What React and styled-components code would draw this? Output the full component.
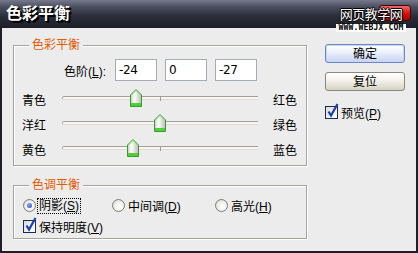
import React from "react";
import styled, { createGlobalStyle } from "styled-components";

const GlobalStyle = createGlobalStyle`
  html, body { margin: 0; padding: 0; background: #1e2029; }
  #root { width: 418px; height: 253px; }
`;

const FONT = `"Liberation Sans", "Noto Sans CJK SC", sans-serif`;

const Window = styled.div`
  position: relative;
  width: 418px;
  height: 253px;
  display: flex;
  flex-direction: column;
  background: #1e2029;
  font-family: ${FONT};
  font-size: 12px;
  color: #000;
  overflow: hidden;
`;

const TitleBar = styled.div`
  height: 28px;
  flex: none;
  display: flex;
  align-items: flex-start;
  justify-content: space-between;
  background: linear-gradient(#767a8c 0%, #4a4d5d 25%, #2a2c38 60%, #1c1e27 100%);
`;

const Title = styled.div`
  padding: 3px 0 0 6px;
  font-size: 16px;
  font-weight: bold;
  line-height: 18px;
  color: #fff;
  text-shadow: 1px 1px 0 #000, 2px 2px 0 #000;
  font-family: "Noto Sans CJK SC", sans-serif;
`;

const CloseBtn = styled.div`
  margin: 5px 7px 0 0;
  width: 30px;
  height: 14px;
  border-radius: 3px;
  border: 1px solid #3a0a0a;
  background: linear-gradient(#f06a6a, #d41616 50%, #a50000);
`;

const Watermark = styled.div`
  position: absolute;
  left: 333px;
  top: 6px;
  width: 76px;
  display: flex;
  flex-direction: column;
  align-items: center;
`;

const WmTitle = styled.div`
  font-family: "Noto Sans CJK SC", sans-serif;
  font-size: 13px;
  line-height: 16px;
  color: #fff;
  letter-spacing: -0.5px;
  text-shadow: 1px 0 0 #000, -1px 0 0 #000, 0 1px 0 #000, 0 -1px 0 #000;
`;

const WmUrl = styled.div`
  margin-top: 2px;
  background: #fff;
  color: #000;
  font-family: "DejaVu Sans Mono", monospace;
  font-size: 8px;
  font-weight: bold;
  line-height: 8px;
  padding: 0 2px;
  letter-spacing: 0.2px;
`;

const Body = styled.div`
  flex: 1;
  margin: 0 2px 2px 2px;
  background: #ececec;
  display: flex;
  padding: 17px 0 0 11px;
`;

const LeftCol = styled.div`
  display: flex;
  flex-direction: column;
  gap: 19px;
`;

const Group = styled.div`
  position: relative;
  width: 294px;
  height: ${(p) => p.$h}px;
  box-sizing: border-box;
  border: 1px solid #a4a49c;
  box-shadow: inset 1px 1px 0 #fff, 1px 1px 0 #fff;
  padding: ${(p) => p.$pad};
  display: flex;
  flex-direction: column;
`;

const Legend = styled.span`
  position: absolute;
  top: -9px;
  left: 15px;
  padding: 0 3px;
  background: #ececec;
  color: #e15a05;
  line-height: 16px;
  font-size: 12px;
`;

const InputRow = styled.div`
  display: flex;
  align-items: center;
  padding-left: 40px;
  height: 22px;
`;

const InputLabel = styled.span`
  width: 44px;
  text-align: right;
  margin-right: 9px;
  white-space: nowrap;
`;

const NumBox = styled.div`
  width: 42px;
  height: 22px;
  box-sizing: border-box;
  border: 1px solid #a5acb5;
  background: #fff;
  margin-right: 8px;
  padding: 0 0 0 3px;
  display: flex;
  align-items: center;
  font-size: 12px;
  font-family: "DejaVu Sans", sans-serif;
  letter-spacing: -0.3px;
`;

const U = styled.span`
  text-decoration: underline;
`;

const SliderRows = styled.div`
  margin-top: 4px;
  display: flex;
  flex-direction: column;
`;

const SliderRow = styled.div`
  height: 25px;
  display: flex;
  align-items: center;
`;

const SideLabel = styled.span`
  width: ${(p) => p.$w}px;
  flex: none;
  padding-top: 3px;
`;

const Track = styled.div`
  position: relative;
  width: 196px;
  height: 25px;
  flex: none;
  margin-right: 15px;
`;

const TrackLine = styled.div`
  margin-top: 11px;
  height: 2px;
  border-top: 1px solid #a09f98;
  border-bottom: 1px solid #dedbd0;
  border-left: 1px solid #b0afa8;
  border-radius: 2px 0 0 2px;
  background: #f7f6f0;
`;

const Tick = styled.div`
  position: absolute;
  left: 98px;
  top: 11px;
  width: 1px;
  height: 5px;
  background: #a09f98;
`;

const ThumbWrap = styled.div`
  position: absolute;
  top: 4px;
  width: 12px;
  height: 18px;
`;

const Thumb = ({ value }) => (
  <ThumbWrap style={{ left: 98 + value - 6 }}>
    <svg width="12" height="18" viewBox="0 0 12 18">
      <defs>
        <linearGradient id="tg" x1="0" y1="0" x2="1" y2="0">
          <stop offset="0" stopColor="#c9c8c0" />
          <stop offset="0.35" stopColor="#ffffff" />
          <stop offset="1" stopColor="#bdbcb4" />
        </linearGradient>
      </defs>
      <path d="M0.5 6 L6 0.5 L11.5 6 L11.5 17.5 L0.5 17.5 Z" fill="url(#tg)" stroke="#3a9a32" />
      <path d="M1.5 6 L6 1.5 L10.5 6" fill="none" stroke="#7fdc6a" />
      <rect x="1" y="14" width="10" height="3" fill="#4fcf3c" />
    </svg>
  </ThumbWrap>
);

const Slider = ({ left, right, value }) => (
  <SliderRow>
    <SideLabel $w={40}>{left}</SideLabel>
    <Track>
      <TrackLine />
      <Tick />
      <Thumb value={value} />
    </Track>
    <SideLabel $w={28}>{right}</SideLabel>
  </SliderRow>
);

const RadioGrid = styled.div`
  display: grid;
  grid-template-columns: 89px 103px auto;
  align-items: center;
  height: 17px;
`;

const Option = styled.label`
  display: flex;
  align-items: center;
  gap: ${(p) => p.$gap ?? 3}px;
  white-space: nowrap;
  height: 15px;
`;

const RadioCircle = styled.span`
  width: 13px;
  height: 13px;
  box-sizing: border-box;
  border-radius: 50%;
  border: 1px solid #7d7d78;
  background: radial-gradient(circle at 60% 60%, #ffffff 0%, #f1f1ee 45%, #cfcfc8 100%);
  display: flex;
  align-items: center;
  justify-content: center;
  flex: none;
`;

const RadioDot = styled.span`
  width: 5px;
  height: 5px;
  border-radius: 50%;
  background: radial-gradient(circle at 40% 35%, #8fa8f0, #2c47b8);
`;

const Focus = styled.span`
  outline: 1px dotted #000;
  padding: 0 1px;
  line-height: 14px;
`;

const CheckBoxBox = styled.span`
  width: 13px;
  height: 13px;
  box-sizing: border-box;
  border: 1px solid #1c2a4e;
  background: linear-gradient(135deg, #dcdcd6, #ffffff);
  flex: none;
  position: relative;
`;

const CheckMark = styled.svg`
  position: absolute;
  left: 1px;
  top: -4px;
`;

const Check = () => (
  <CheckBoxBox>
    <CheckMark width="12" height="15" viewBox="0 0 12 15">
      <path d="M1.5 8.5 L4 12.5 L10.5 1" fill="none" stroke="#1f3fa8" strokeWidth="2.2" />
    </CheckMark>
  </CheckBoxBox>
);

const CheckRow = styled.div`
  margin-top: ${(p) => p.$mt}px;
`;

const RightCol = styled.div`
  margin-left: 18px;
  margin-top: -1px;
  display: flex;
  flex-direction: column;
  width: 80px;
`;

const Button = styled.div`
  height: 19px;
  box-sizing: border-box;
  border-radius: 3px;
  border: 1px solid ${(p) => (p.$primary ? "#6e86c8" : "#8a877c")};
  background: ${(p) =>
    p.$primary
      ? "linear-gradient(#ffffff, #eef2fc 40%, #c6d3f2)"
      : "linear-gradient(#ffffff, #f4f3ee 40%, #d6d2c4)"};
  box-shadow: ${(p) => (p.$primary ? "inset 0 0 0 1px #c9d6f6" : "none")};
  display: flex;
  align-items: center;
  justify-content: center;
  margin-bottom: ${(p) => p.$mb}px;
  line-height: 14px;
`;

export default function App() {
  return (
    <Window>
      <GlobalStyle />
      <TitleBar>
        <Title>色彩平衡</Title>
        <CloseBtn />
      </TitleBar>
      <Watermark>
        <WmTitle>网页教学网</WmTitle>
        <WmUrl>WWW.WEBJX.COM</WmUrl>
      </Watermark>
      <Body>
        <LeftCol>
          <Group $h={121} $pad="13px 0 0 8px">
            <Legend>色彩平衡</Legend>
            <InputRow>
              <InputLabel>
                色阶(<U>L</U>):
              </InputLabel>
              <NumBox>-24</NumBox>
              <NumBox>0</NumBox>
              <NumBox>-27</NumBox>
            </InputRow>
            <SliderRows>
              <Slider left="青色" right="红色" value={-24} />
              <Slider left="洋红" right="绿色" value={0} />
              <Slider left="黄色" right="蓝色" value={-27} />
            </SliderRows>
          </Group>
          <Group $h={54} $pad="11px 0 0 9px">
            <Legend>色调平衡</Legend>
            <RadioGrid>
              <Option $gap={2}>
                <RadioCircle>
                  <RadioDot />
                </RadioCircle>
                <Focus>
                  阴影(<U>S</U>)
                </Focus>
              </Option>
              <Option>
                <RadioCircle />
                <span>
                  中间调(<U>D</U>)
                </span>
              </Option>
              <Option>
                <RadioCircle />
                <span>
                  高光(<U>H</U>)
                </span>
              </Option>
            </RadioGrid>
            <CheckRow $mt={5}>
              <Option>
                <Check />
                <span>
                  保持明度(<U>V</U>)
                </span>
              </Option>
            </CheckRow>
          </Group>
        </LeftCol>
        <RightCol>
          <Button $primary $mb={9}>确定</Button>
          <Button $mb={14}>复位</Button>
          <Option>
            <Check />
            <span>
              预览(<U>P</U>)
            </span>
          </Option>
        </RightCol>
      </Body>
    </Window>
  );
}
